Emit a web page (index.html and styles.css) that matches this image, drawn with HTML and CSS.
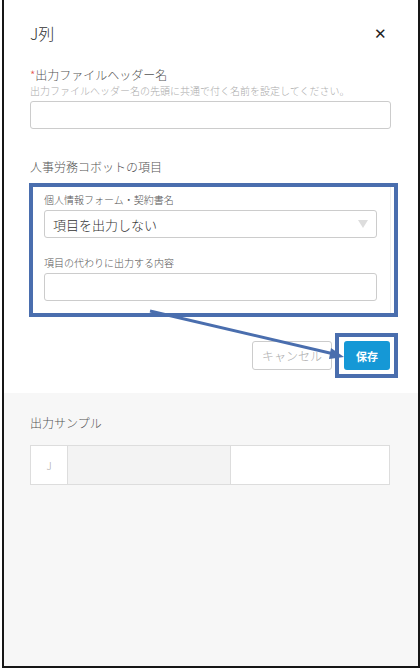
FILE: index.html
```html
<!DOCTYPE html>
<html>
<head>
    <meta charset="utf-8">
    <title>J列</title>
<link rel="stylesheet" href="styles.css">
</head>
<body>
    <div class="frame">

        <div class="panel">
            <div class="panel-head">
                <h1 class="panel-title">J列</h1>
                <span class="close">&#x2715;</span>
            </div>

            <div class="field">
                <div class="field-label"><span class="req">*</span>出力ファイルヘッダー名</div>
                <div class="field-help">出力ファイルヘッダー名の先頭に共通で付く名前を設定してください。</div>
                <div class="input"></div>
            </div>

            <div class="section-label">人事労務コボットの項目</div>
            <div class="group">
                <div class="group-label">個人情報フォーム・契約書名</div>
                <div class="select">
                    <span>項目を出力しない</span>
                    <span class="caret"></span>
                </div>
                <div class="group-label second">項目の代わりに出力する内容</div>
                <div class="input"></div>
            </div>

            <div class="actions">
                <span class="btn btn-cancel">キャンセル</span>
                <span class="btn btn-save">保存</span>
            </div>
        </div>

        <div class="sample">
            <div class="section-label">出力サンプル</div>
            <div class="sample-row">
                <div class="cell cell-key">J</div>
                <div class="cell cell-empty"></div>
                <div class="cell cell-value"></div>
            </div>
        </div>

        <!-- callout marks laid over the form -->
        <div class="mark mark-group"></div>
        <div class="mark mark-save"></div>
        <svg class="mark-arrow" width="420" height="670" viewBox="0 0 420 670">
            <line x1="150" y1="311" x2="334" y2="354" stroke="#4a6eae" stroke-width="3"/>
            <polygon points="344,357 331,348 329,359" fill="#4a6eae"/>
        </svg>
    </div>
</body>
</html>
```

FILE: styles.css
```css
BODY, H1 {
    margin: 0;
    padding: 0;
}
BODY {
    background: #fff;
    font-family: "Noto Sans CJK JP", "Noto Sans", sans-serif;
    font-weight: 300;
    color: #333;
}
.frame {
    position: relative;
    box-sizing: border-box;
    width: 418px;
    height: 668px;
    margin-left: 2px;
    border: 2px solid #161616;
    border-top: none;
    background: #f7f7f7;
    display: flex;
    flex-direction: column;
}

/* white form area */
.panel {
    background: #fff;
    padding: 0 27px 23px 26px;
}
.panel-head {
    display: flex;
    justify-content: space-between;
    align-items: center;
    height: 64px;
    padding-top: 2px;
    box-sizing: border-box;
}
.panel-title {
    font-size: 16px;
    font-weight: 300;
    color: #333;
    line-height: 22px;
}
.close {
    font-size: 15px;
    font-weight: normal;
    color: #222;
    margin-right: 4px;
    line-height: 22px;
}
.field-label {
    font-size: 12px;
    line-height: 16px;
    color: #555;
    margin-top: 3px;
}
.req {
    color: #e5534b;
}
.field-help {
    font-size: 10px;
    line-height: 14px;
    color: #aaa;
    margin-top: 1px;
}
.input {
    height: 28px;
    box-sizing: border-box;
    border: 1px solid #ccc;
    border-radius: 3px;
    background: #fff;
    margin-top: 3px;
}
.section-label {
    font-size: 12px;
    line-height: 16px;
    color: #555;
    margin-top: 30px;
}
.group {
    padding: 0 13px 15px 13px;
    margin-top: 10px;
    border: 1px solid #eee;
}
.group-label {
    font-size: 10px;
    line-height: 14px;
    color: #555;
    margin-top: 7px;
}
.group-label.second {
    margin-top: 18px;
}
.select {
    display: flex;
    justify-content: space-between;
    align-items: center;
    height: 28px;
    box-sizing: border-box;
    border: 1px solid #ccc;
    border-radius: 3px;
    padding: 0 8px 0 8px;
    font-size: 13px;
    color: #333;
    margin-top: 3px;
}
.caret {
    width: 0;
    height: 0;
    border-left: 5px solid transparent;
    border-right: 5px solid transparent;
    border-top: 8px solid #ddd;
}
.actions {
    display: flex;
    justify-content: flex-end;
    gap: 12px;
    margin-top: 24px;
    padding-right: 1px;
}
.btn {
    display: flex;
    align-items: center;
    justify-content: center;
    height: 29px;
    box-sizing: border-box;
    border-radius: 3px;
    font-size: 12px;
}
.btn-cancel {
    width: 80px;
    border: 1px solid #ccc;
    color: #aaa;
    background: #fff;
}
.btn-save {
    width: 46px;
    background: #1598d6;
    color: #fff;
    font-weight: bold;
    font-size: 11px;
}

/* gray sample area */
.sample {
    flex: 1;
    padding: 0 28px 0 26px;
}
.sample .section-label {
    margin-top: 22px;
}
.sample-row {
    display: flex;
    height: 38px;
    margin-top: 14px;
    border: 1px solid #ddd;
    background: #fff;
}
.cell {
    display: flex;
    align-items: center;
    justify-content: center;
}
.cell-key {
    width: 36px;
    font-size: 10px;
    color: #aaa;
    border-right: 1px solid #ddd;
}
.cell-empty {
    width: 162px;
    background: #f3f3f3;
    border-right: 1px solid #ddd;
}
.cell-value {
    flex: 1;
}

/* callouts */
.mark {
    position: absolute;
    box-sizing: border-box;
    border: 4px solid #4a6eae;
}
.mark-group {
    left: 25px;
    top: 183px;
    width: 369px;
    height: 134px;
}
.mark-save {
    left: 331px;
    top: 333px;
    width: 63px;
    height: 45px;
}
.mark-arrow {
    position: absolute;
    left: -4px;
    top: 0;
    pointer-events: none;
}
```
